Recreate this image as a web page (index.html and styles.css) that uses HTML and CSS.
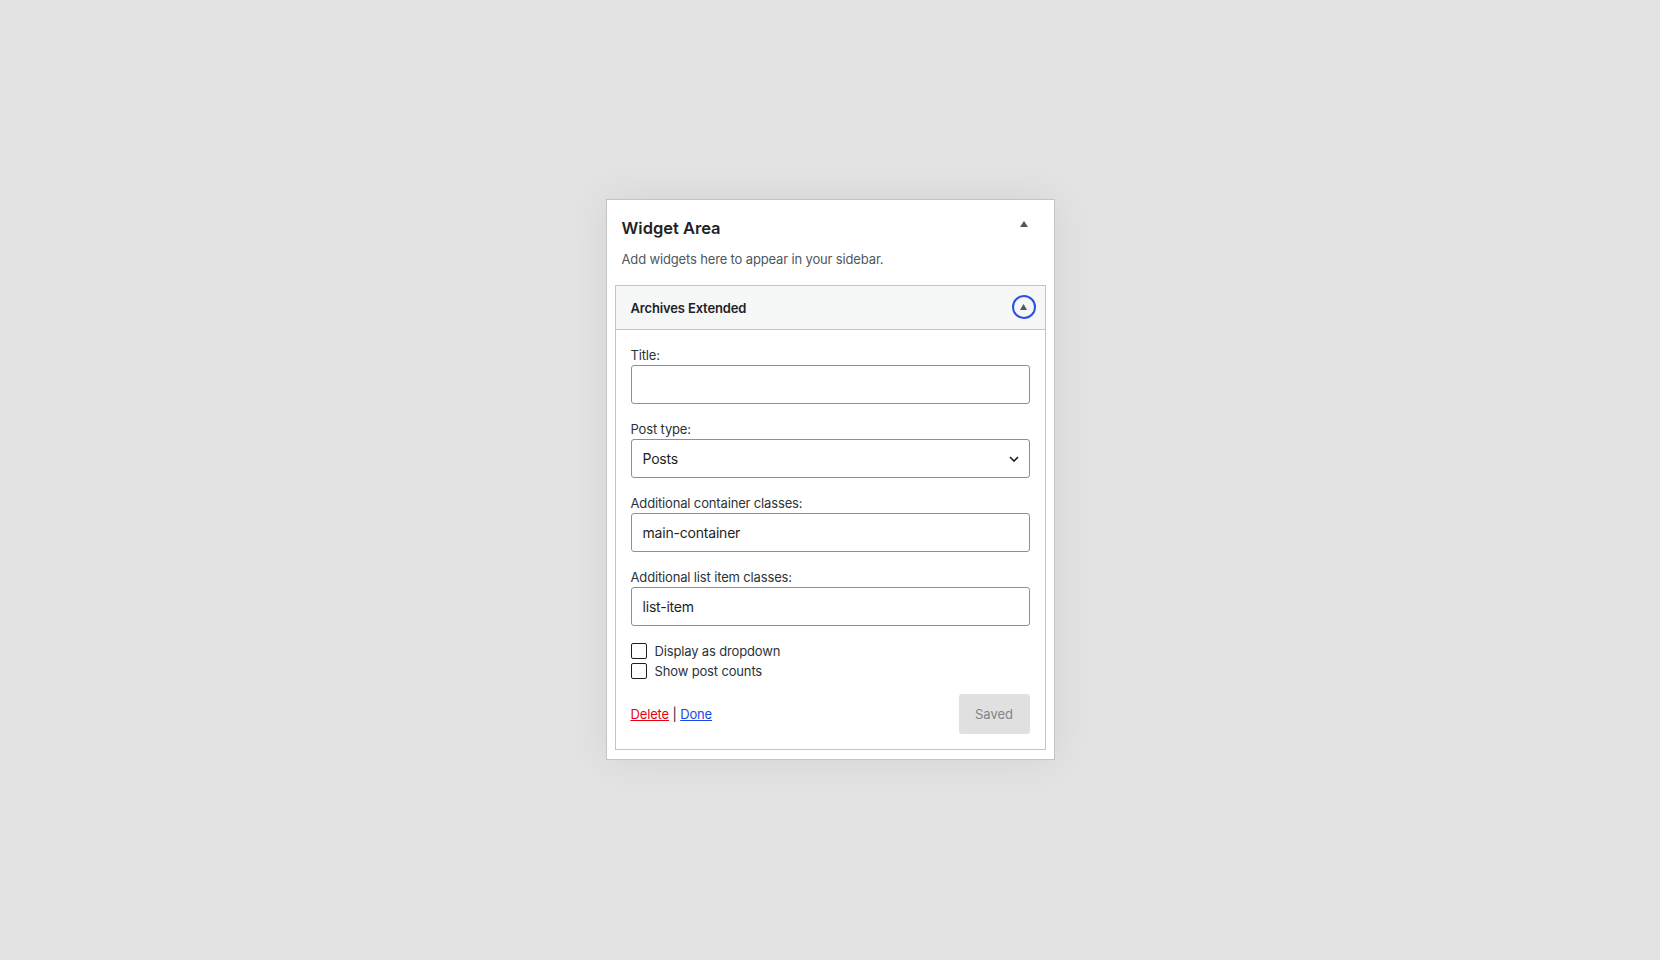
FILE: index.html
```html
<!DOCTYPE html>
<html lang="en">
<head>
<meta charset="utf-8">
<title>Widget Area</title>
<link rel="stylesheet" href="styles.css">
</head>
<body>
<main class="page">
  <section class="sidebar">
    <div class="sidebar-head">
      <h2 class="sidebar-title">Widget Area</h2>
      <button class="toggle-plain" type="button" aria-label="Collapse">
        <svg width="8" height="6" viewBox="0 0 8 6"><polygon points="4,0 8,6 0,6" fill="#50575e"/></svg>
      </button>
    </div>
    <p class="sidebar-desc">Add widgets here to appear in your sidebar.</p>

    <div class="widget">
      <div class="widget-top">
        <h3 class="widget-title">Archives Extended</h3>
        <button class="toggle-focus" type="button" aria-label="Collapse widget">
          <svg width="7" height="6" viewBox="0 0 7 6"><polygon points="3.5,0 7,6 0,6" fill="#50575e"/></svg>
        </button>
      </div>
      <div class="widget-inside">
        <div class="fields">
          <div class="field">
            <label class="field-label" for="w-title">Title:</label>
            <input class="field-input" id="w-title" type="text" value="">
          </div>
          <div class="field">
            <label class="field-label" for="w-type">Post type:</label>
            <div class="select-wrap">
              <select class="field-input field-select" id="w-type">
                <option>Posts</option>
              </select>
              <svg class="select-chevron" width="10" height="6" viewBox="0 0 10 6"><polyline points="1,1 5,5 9,1" fill="none" stroke="#1e1e1e" stroke-width="1.6"/></svg>
            </div>
          </div>
          <div class="field">
            <label class="field-label" for="w-cont">Additional container classes:</label>
            <input class="field-input" id="w-cont" type="text" value="main-container">
          </div>
          <div class="field">
            <label class="field-label" for="w-item">Additional list item classes:</label>
            <input class="field-input" id="w-item" type="text" value="list-item">
          </div>
        </div>

        <div class="checks">
          <label class="check-row"><input class="check" type="checkbox"><span>Display as dropdown</span></label>
          <label class="check-row"><input class="check" type="checkbox"><span>Show post counts</span></label>
        </div>

        <div class="actions">
          <div class="links">
            <a class="link-delete" href="#">Delete</a> | <a class="link-done" href="#">Done</a>
          </div>
          <button class="btn-saved" type="button" disabled>Saved</button>
        </div>
      </div>
    </div>
  </section>
</main>
</body>
</html>
```

FILE: styles.css
```css
* { box-sizing: border-box; }

html, body {
  margin: 0;
  padding: 0;
}

body {
  background: #e3e3e3;
  font-family: Inter, "Liberation Sans", Arial, sans-serif;
  color: #1e1e1e;
  letter-spacing: -0.15px;
}

.page {
  height: 100vh;
  padding-bottom: 1px;
  display: flex;
  align-items: center;
  justify-content: center;
}

.sidebar {
  width: 449px;
  background: #fff;
  border: 1px solid #c3c4c7;
  box-shadow: 0 0 40px rgba(0, 0, 0, 0.07);
  padding: 0 8px 9px;
}

.sidebar-head {
  display: flex;
  justify-content: space-between;
  align-items: flex-start;
  padding: 17px 10px 0 7px;
}

.sidebar-title {
  margin: 0;
  font-size: 16.5px;
  line-height: 22px;
  font-weight: 600;
  color: #1d2327;
  letter-spacing: 0;
}

.toggle-plain {
  width: 24px;
  height: 14px;
  padding: 0;
  border: 0;
  background: none;
  display: flex;
  align-items: center;
  justify-content: center;
}

.sidebar-desc {
  margin: 11px 0 0 7px;
  font-size: 13px;
  line-height: 19px;
  color: #50575e;
}

.widget {
  margin-top: 16px;
  border: 1px solid #c3c4c7;
  background: #fff;
}

.widget-top {
  height: 44px;
  display: flex;
  align-items: center;
  justify-content: space-between;
  padding: 0 9px 0 15px;
  background: #f6f7f7;
  border-bottom: 1px solid #c3c4c7;
}

.widget-title {
  margin: 0;
  font-size: 13px;
  line-height: 18px;
  font-weight: 600;
  color: #1d2327;
  padding-top: 1px;
}

.toggle-focus {
  width: 24px;
  height: 24px;
  padding: 0;
  border: 2px solid #2b4fe6;
  border-radius: 50%;
  background: none;
  display: flex;
  align-items: center;
  justify-content: center;
  margin-top: -1px;
}

.widget-inside {
  padding: 16px 15px 15px;
}

.fields {
  display: flex;
  flex-direction: column;
  gap: 16px;
}

.field-label {
  display: block;
  font-size: 13px;
  line-height: 19px;
  color: #2c3338;
}

.field-input {
  display: block;
  width: 100%;
  height: 39px;
  margin: 0;
  padding: 0 11px;
  border: 1px solid #8c8f94;
  border-radius: 3px;
  background: #fff;
  font-family: inherit;
  font-size: 14px;
  letter-spacing: -0.2px;
  color: #1e1e1e;
  outline: none;
}

.select-wrap {
  position: relative;
}

.field-select {
  appearance: none;
  -webkit-appearance: none;
}

.select-chevron {
  position: absolute;
  right: 11px;
  top: 17px;
  pointer-events: none;
}

.checks {
  margin-top: 15px;
}

.check-row {
  display: flex;
  align-items: center;
  height: 20px;
  font-size: 13px;
  color: #2c3338;
}

.check {
  appearance: none;
  -webkit-appearance: none;
  width: 16px;
  height: 16px;
  margin: 0 8px 0 0;
  border: 1px solid #1e1e1e;
  border-radius: 2px;
  background: #fff;
}

.actions {
  margin-top: 13px;
  display: flex;
  align-items: center;
  justify-content: space-between;
}

.links {
  font-size: 13px;
  color: #1e1e1e;
}

.link-delete {
  color: #e3000f;
}

.link-done {
  color: #1a47e8;
}

.btn-saved {
  width: 71px;
  height: 40px;
  border: 0;
  border-radius: 3px;
  background: #e0e0e0;
  color: #838589;
  font-family: inherit;
  font-size: 13px;
}
```
